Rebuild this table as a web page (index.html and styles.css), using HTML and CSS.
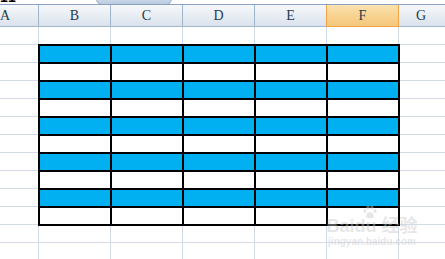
FILE: index.html
```html
<!DOCTYPE html>
<html lang="en">
<head>
    <meta charset="UTF-8">
    <meta name="viewport" content="width=device-width, initial-scale=1.0">
    <title>Sheet1</title>
    <link rel="stylesheet" href="styles.css">
</head>
<body>
    <div class="topbar">
        <span class="cut">11</span>
        <div class="tab"></div>
    </div>

    <div class="colbar">
        <div class="col first">A</div>
        <div class="col">B</div>
        <div class="col">C</div>
        <div class="col">D</div>
        <div class="col">E</div>
        <div class="col active">F</div>
        <div class="col last">G</div>
    </div>

    <div class="sheet">
        <table class="grid"></table>
        <div class="mark">
            <svg class="paw" width="16" height="14" viewBox="0 0 16 14">
                <ellipse cx="3" cy="6" rx="1.6" ry="2" />
                <ellipse cx="6" cy="2.5" rx="1.6" ry="2" />
                <ellipse cx="10" cy="2.5" rx="1.6" ry="2" />
                <ellipse cx="13" cy="6" rx="1.6" ry="2" />
                <path d="M8 7 C5 7 3.5 11 4.5 12.5 C6 13.5 10 13.5 11.5 12.5 C12.5 11 11 7 8 7 Z" />
            </svg>
            <div class="mark-logo">Bai<span>du</span> 经验</div>
            <div class="mark-url">jingyan.baidu.com</div>
        </div>
    </div>

    <script>
        let grid = document.querySelector(".grid");
        for (let r = 0; r < 10; r++) {
            let row = "<tr class='" + (r % 2 == 0 ? "blue" : "white") + "'>";
            for (let c = 0; c < 5; c++) {
                row += "<td></td>";
            }
            grid.innerHTML += row + "</tr>";
        }
    </script>
</body>
</html>
```

FILE: styles.css
```css
body {
    margin: 0;
    width: 445px;
    height: 259px;
    overflow: hidden;
    background: #fff;
    font-family: "Liberation Serif", "DejaVu Serif", serif;
}
.topbar {
    position: relative;
    height: 4px;
    overflow: hidden;
    border-bottom: 1px solid #8aa2bf;
}
.cut {
    display: block;
    margin-top: -10px;
    font-family: "Liberation Sans", Arial, sans-serif;
    font-weight: bold;
    font-size: 14px;
    line-height: 14px;
    color: #000;
    letter-spacing: 1px;
}
.tab {
    position: absolute;
    left: 96px;
    top: -6px;
    width: 74px;
    height: 9px;
    border-radius: 0 0 6px 6px;
    border: 1px solid #97acc6;
    background: linear-gradient(#dbe5f1, #b9cbe0);
}
.colbar {
    display: flex;
    height: 21px;
    border-bottom: 1px solid #9eb6ce;
    background: linear-gradient(#f6f8fb, #e6ebf2 60%, #dbe2ec);
}
.col {
    flex: 0 0 71px;
    border-right: 1px solid #9eb6ce;
    text-align: center;
    font-size: 14px;
    line-height: 22px;
    color: #243c4e;
}
.col.first {
    flex-basis: 38px;
    text-align: left;
}
.col.last {
    flex: 1;
    border-right: none;
    padding-right: 2px;
}
.col.active {
    background: linear-gradient(#fbe2b0, #f8d28e 55%, #f4c77b);
    border-color: #f1a545;
    border-bottom: 1px solid #f1a545;
    margin-left: -1px;
    border-left: 1px solid #f1a545;
    height: 21px;
}
.sheet {
    position: relative;
    height: 233px;
    background-image:
        linear-gradient(90deg, transparent 38px, #d4dbe8 38px, #d4dbe8 39px, transparent 39px),
        linear-gradient(transparent 17px, #d4dbe8 17px, #d4dbe8 18px, transparent 18px);
    background-size: 72px 100%, 100% 18px;
    background-position: 0 0, 0 0;
    padding-top: 17px;
    box-sizing: border-box;
}
.grid {
    border-collapse: collapse;
    margin-left: 38px;
    border: 2px solid #000;
}
.grid td {
    width: 70px;
    height: 16px;
    padding: 0;
    border: 2px solid #000;
}
.grid .blue td {
    background: #00b0f0;
}
.grid .white td {
    background: #fff;
}
.mark {
    position: absolute;
    left: 322px;
    top: 178px;
    width: 100px;
    white-space: nowrap;
    text-align: center;
    color: rgba(200, 200, 200, 0.45);
    font-family: "Liberation Sans", "Noto Sans CJK SC", sans-serif;
    font-weight: bold;
    pointer-events: none;
}
.paw {
    display: block;
    margin: 0 0 -3px 40px;
    fill: rgba(200, 200, 200, 0.45);
}
.mark-logo {
    font-size: 18px;
    line-height: 20px;
}
.mark-url {
    font-size: 10px;
    line-height: 12px;
}
```
